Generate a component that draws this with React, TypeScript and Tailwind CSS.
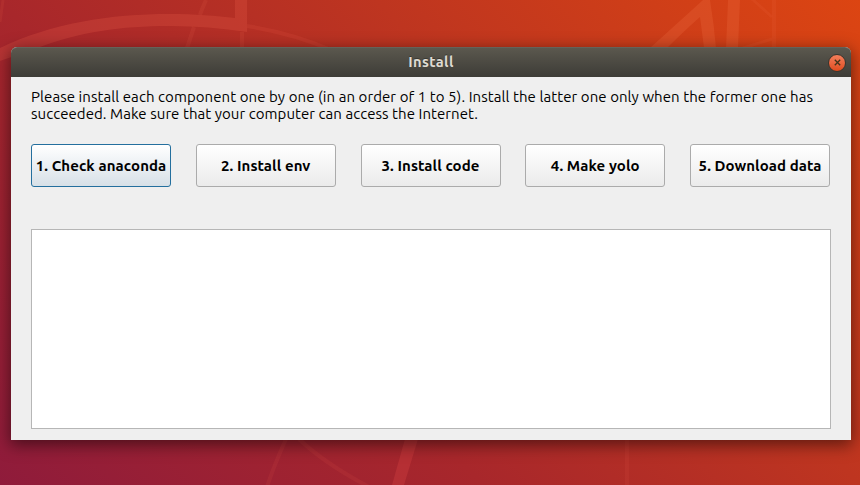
const steps = [
  { label: '1. Check anaconda', spacing: 'tracking-[0.09px]', focused: true },
  { label: '2. Install env', spacing: 'tracking-[0.08px]' },
  { label: '3. Install code', spacing: 'tracking-[0.07px]' },
  { label: '4. Make yolo', spacing: 'tracking-[0.09px]' },
  { label: '5. Download data', spacing: 'tracking-[0.06px]' },
];

function Wallpaper() {
  return (
    <svg className="absolute inset-0" width="860" height="485" viewBox="0 0 860 485" fill="none" aria-hidden="true">
      <path d="M0 48C52 23 110 14 170 14C195 14 216 16 235 18V0H247V32C222 28 195 26 170 26C120 26 80 32 40 47L0 61Z" fill="#e65b4a" fillOpacity="0.26" />
      <g stroke="#e65b4a">
        <path d="M206 0C203 7 201 11 200 15M194 27L187 48M242 32V48" strokeWidth="4" strokeOpacity="0.15" />
        <path d="M247 26C278 31 306 39 331 50" strokeWidth="4" strokeOpacity="0.17" />
        <path d="M3 0L0 22" strokeWidth="3" strokeOpacity="0.14" />
        <path d="M286 439Q273 468 267 487M299 439Q324 463 369 487" strokeWidth="4" strokeOpacity="0.12" />
        <path d="M627 439V485" strokeWidth="4" strokeOpacity="0.12" />
      </g>
      <path d="M405 439H418L404 485H392Z" fill="#d94345" fillOpacity="0.32" />
      <g fill="#ef7042" fillOpacity="0.25">
        <path d="M650 48Q681 20 703 0H710Q714 24 716 48H704L700 17Q685 30 667 48Z" />
        <path d="M728 0H740L738 48H726Z" />
      </g>
      <g stroke="#ef7042" strokeOpacity="0.13" strokeWidth="4">
        <path d="M774 0V48" />
        <path d="M752 -1L772 17M772 39L740 49" strokeWidth="3" />
      </g>
    </svg>
  );
}

export default function App() {
  return (
    <div className="relative h-[485px] w-[860px] overflow-hidden bg-[linear-gradient(45deg,#8f1b3b_0%,#a8272b_36%,#be3520_64%,#dc4512_100%)] pl-[11px] pt-[47px] font-['Ubuntu','Noto_Sans',sans-serif] text-[15px]">
      <Wallpaper />
      <main className="relative flex h-[393px] w-[840px] flex-col rounded-t-[6px] bg-[#efefef] shadow-[0_4px_16px_1px_rgba(0,0,0,0.5)]">
        <header className="grid h-[30px] shrink-0 grid-cols-[1fr_auto_1fr] items-center rounded-t-[6px] border-t border-[#65625a] bg-linear-to-b from-[#5b584e] to-[#3d3c37] pr-[5px]">
          <span />
          <h1 className="-mt-px ml-[5px] text-[14.67px] font-bold leading-[18px] tracking-[0.4px] text-[#dfdbd2] [text-shadow:0_-1px_0_#393832]">Install</h1>
          <button aria-label="Close" className="flex size-[18px] items-center justify-center justify-self-end rounded-full border border-[#3a352e] bg-linear-to-b from-[#f37e5a] to-[#df4b1b]">
            <svg width="7" height="7" viewBox="0 0 7 7" stroke="#41341b" strokeWidth="1.3" aria-hidden="true">
              <path d="M.8.8 6.2 6.2M6.2.8.8 6.2" />
            </svg>
          </button>
        </header>
        <div className="flex flex-1 flex-col px-5 pb-[11px] pt-[11px]">
          <p className="whitespace-nowrap leading-[17px] text-black">
            <span className="block tracking-[0.07px]">Please install each component one by one (in an order of 1 to 5). Install the latter one only when the former one has</span>
            <span className="block tracking-[0.06px]">succeeded. Make sure that your computer can access the Internet.</span>
          </p>
          <div className="mt-[22px] flex w-[799px] justify-between">
            {steps.map((step) => (
              <button
                key={step.label}
                className={`flex h-[43px] w-[140px] items-center justify-center whitespace-nowrap rounded-[3px] border bg-linear-to-b pt-[2px] font-bold text-black ${step.spacing} ${step.focused ? 'border-[#246f9e] from-white to-[#d7e0e7]' : 'border-[#ababab] from-white to-[#ebebeb]'}`}
              >
                {step.label}
              </button>
            ))}
          </div>
          <textarea aria-label="Installation output" className="mt-[42px] block h-[200px] w-[800px] resize-none border border-[#b6b6b6] bg-white outline-none" />
        </div>
      </main>
    </div>
  );
}
